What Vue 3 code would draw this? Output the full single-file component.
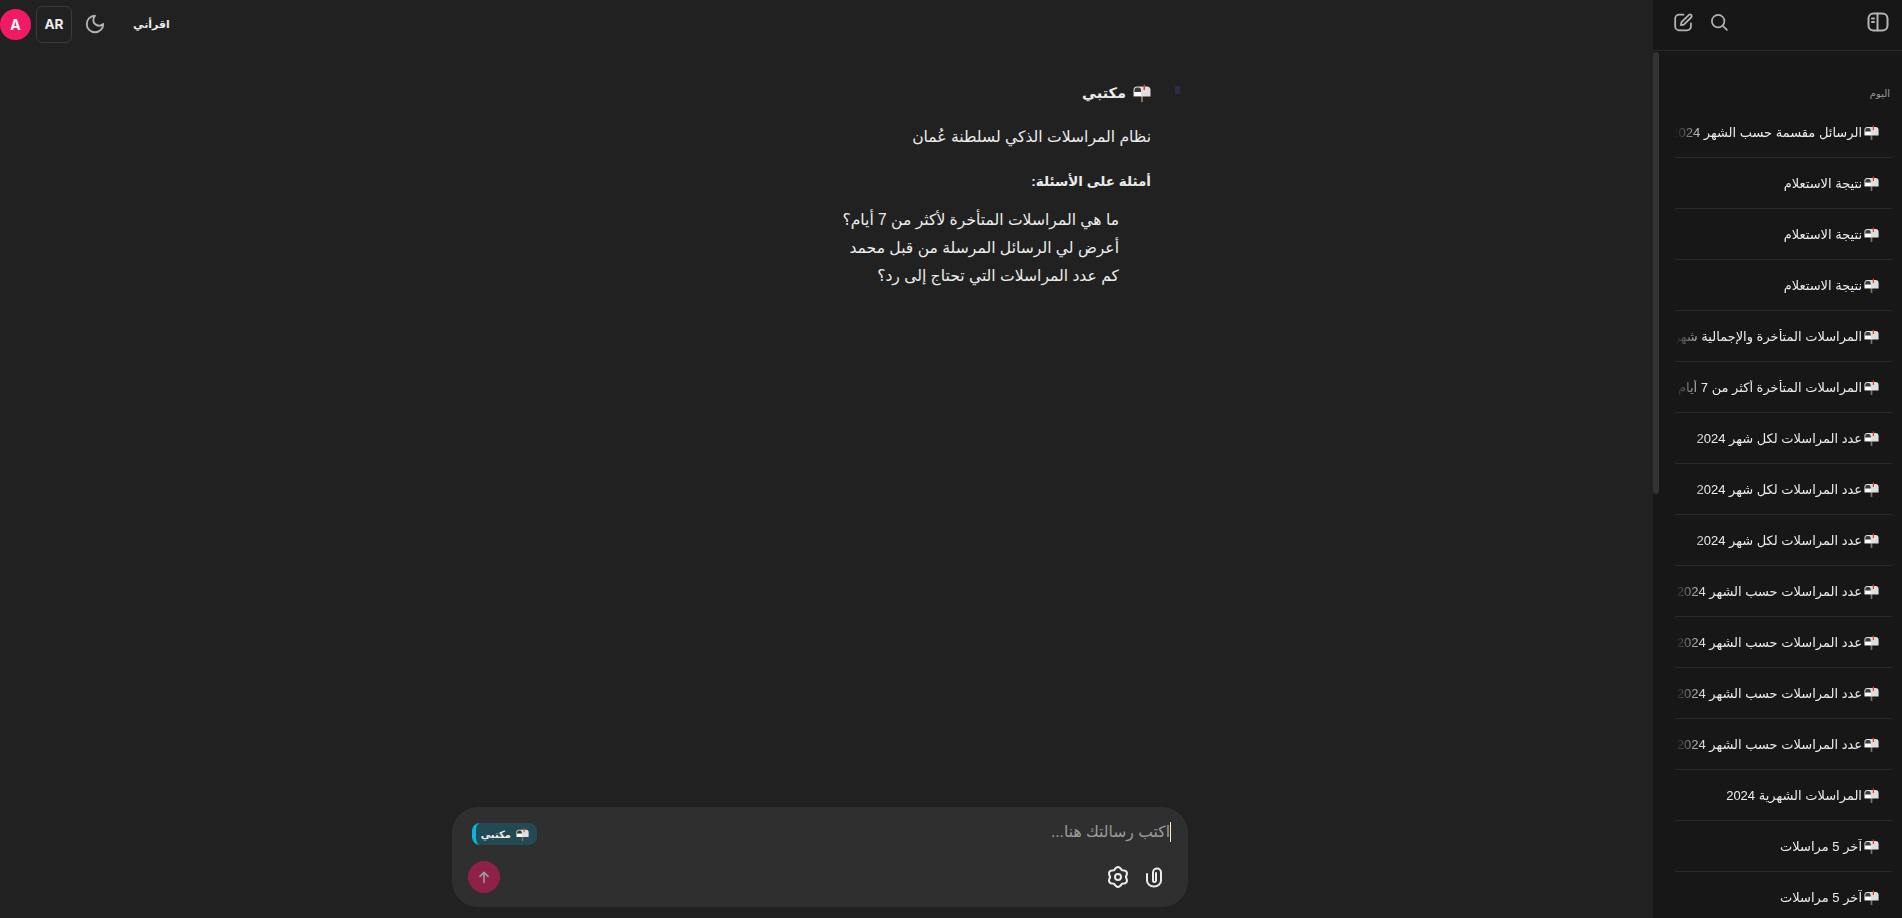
<template>
  <div class="page" dir="rtl">
    <svg class="defs" width="0" height="0" aria-hidden="true">
      <symbol id="mailbox" viewBox="0 0 18 18">
        <path d="M8 12h2v6H8z" fill="#8a6f55" />
        <path d="M4 2.500h10A3.500 3.500 0 0 1 17.500 6v6.500H.5V6A3.500 3.500 0 0 1 4 2.500z" fill="#dedede" />
        <path d="M4 3.500A2.500 2.500 0 0 0 1.500 6v2h6.500V6a2.500 2.500 0 0 0-2.500-2.500z" fill="#3a3a3a" />
        <path d="M1.500 8H8v4H1.500z" fill="#fff" />
        <path d="M10.500 .5H12V6h-1.500z" fill="#e8392e" />
      </symbol>
    </svg>

    <aside class="sidebar">
      <div class="side-top">
        <button class="icon-btn">
          <svg viewBox="0 0 24 24" width="24" height="24"><rect x="2.500" y="3.500" width="19" height="17" rx="5" /><path d="M11.500 3.500v17M6 8.500h2M6 12h2" /></svg>
        </button>
        <div class="side-actions">
          <button class="icon-btn">
            <svg viewBox="0 0 24 24" width="20" height="20"><circle cx="11" cy="11" r="7.500" /><path d="m16.500 16.500 5 5" /></svg>
          </button>
          <button class="icon-btn">
            <svg viewBox="0 0 24 24" width="21" height="21"><path d="M12 3H7a4.500 4.500 0 0 0-4.500 4.500v9A4.500 4.500 0 0 0 7 21h9a4.500 4.500 0 0 0 4.500-4.500V13" /><path d="m9 15 .7-3.300L18.200 3.200a2 2 0 0 1 2.800 2.800L12.400 14.400z" /></svg>
          </button>
        </div>
      </div>
      <div class="side-scroll">
        <div class="thumb"></div>
        <div class="day">اليوم</div>
        <div v-for="(item, i) in chats" :key="i" class="chat-row">
          <svg class="mail" width="15" height="15"><use href="#mailbox" /></svg>
          <span class="chat-title">{{ item }}</span>
        </div>
      </div>
    </aside>

    <main class="main">
      <header class="topbar">
        <span class="readme">اقرأني</span>
        <button class="icon-btn moon">
          <svg viewBox="0 0 24 24" width="22" height="22"><path d="M12 3a6 6 0 0 0 9 9 9 9 0 1 1-9-9Z" /></svg>
        </button>
        <div class="lang">AR</div>
        <div class="avatar">A</div>
      </header>

      <section class="conversation">
        <div class="message">
          <i class="broken-avatar"></i>
          <div class="body">
            <div class="name"><svg class="mail" width="18" height="18"><use href="#mailbox" /></svg><span>مكتبي</span></div>
            <p class="lead">نظام المراسلات الذكي لسلطنة عُمان</p>
            <p class="lead examples-title"><strong>أمثلة على الأسئلة:</strong></p>
            <ul>
              <li v-for="q in examples" :key="q">{{ q }}</li>
            </ul>
          </div>
        </div>
      </section>

      <div class="composer">
        <div class="input-line">
          <span class="placeholder">اكتب رسالتك هنا...</span>
          <span class="chip"><svg class="mail" width="13" height="13"><use href="#mailbox" /></svg><span>مكتبي</span></span>
        </div>
        <div class="tools">
          <div class="tool-icons">
            <button class="icon-btn light">
              <svg viewBox="0 0 24 24" width="24" height="24"><path d="M5 9v6.500a7 6 0 0 0 14 0V7.500a4 4 0 0 0-8 0v8a1.500 1.500 0 0 0 3 0V8" /></svg>
            </button>
            <button class="icon-btn light">
              <svg viewBox="0 0 24 24" width="24" height="24"><path d="M8.100 5.250Q12-1.250 15.900 5.250 23.470 5.375 19.800 12 23.470 18.625 15.900 18.750 12 25.250 8.100 18.750 .53 18.625 4.200 12 .53 5.375 8.100 5.250Z" /><circle cx="12" cy="12" r="3" /></svg>
            </button>
          </div>
          <button class="send">
            <svg viewBox="0 0 24 24" width="16" height="16"><path d="M12 20V5M6 11l6-6 6 6" /></svg>
          </button>
        </div>
      </div>
    </main>
  </div>
</template>

<script setup>
const late = 'المراسلات المتأخرة'
const chats = [
  'الرسائل مقسمة حسب الشهر 2024',
  'نتيجة الاستعلام',
  'نتيجة الاستعلام',
  'نتيجة الاستعلام',
  late + ' والإجمالية شهريا',
  late + ' أكثر من 7 أيام',
  'عدد المراسلات لكل شهر 2024',
  'عدد المراسلات لكل شهر 2024',
  'عدد المراسلات لكل شهر 2024',
  'عدد المراسلات حسب الشهر 2024',
  'عدد المراسلات حسب الشهر 2024',
  'عدد المراسلات حسب الشهر 2024',
  'عدد المراسلات حسب الشهر 2024',
  'المراسلات الشهرية 2024',
  'آخر 5 مراسلات',
  'آخر 5 مراسلات',
]

const examples = [
  'ما هي المراسلات المتأخرة لأكثر من 7 أيام؟',
  'أعرض لي الرسائل المرسلة من قبل محمد',
  'كم عدد المراسلات التي تحتاج إلى رد؟',
]
</script>

<style>
html, body {
  margin: 0;
  background: #212121;
  overflow: hidden;
}
</style>

<style scoped>
.page {
  display: flex;
  height: 918px;
  overflow: hidden;
  background: #212121;
  color: #ececec;
  font-family: "Liberation Sans", "DejaVu Sans", sans-serif;
}

.defs {
  position: absolute;
}

.sidebar {
  width: 249px;
  flex-shrink: 0;
  background: #171717;
  display: flex;
  flex-direction: column;
  overflow: hidden;
}

.side-top {
  height: 51px;
  flex-shrink: 0;
  box-sizing: border-box;
  border-bottom: 1px solid #2a2a2a;
  display: flex;
  align-items: center;
  justify-content: space-between;
  padding: 0 12px 6px 20px;
}

.side-actions {
  display: flex;
  gap: 15px;
  align-items: center;
}

.icon-btn {
  background: none;
  border: 0;
  padding: 0;
  color: #b4b4b4;
  display: flex;
  cursor: pointer;
}

.icon-btn svg {
  fill: none;
  stroke: currentColor;
  stroke-width: 2;
  stroke-linecap: round;
  stroke-linejoin: round;
}

.icon-btn.light {
  color: #ececec;
}

.side-scroll {
  position: relative;
  flex: 1;
  padding: 35px 10px 0 22px;
}

.thumb {
  position: absolute;
  left: 0;
  top: 1px;
  width: 6px;
  height: 442px;
  background: #333;
  border-radius: 3px;
}

.day {
  font-size: 10px;
  color: #9a9a9a;
  height: 16px;
  line-height: 16px;
  padding-right: 2px;
  margin-bottom: 5px;
}

.chat-row {
  height: 51px;
  box-sizing: border-box;
  border-bottom: 1px solid #2a2a2a;
  display: flex;
  align-items: center;
  gap: 2px;
  padding-right: 13px;
  font-size: 13px;
  overflow: hidden;
}

.chat-title {
  flex: 1;
  min-width: 0;
  white-space: nowrap;
  overflow: hidden;
  -webkit-mask-image: linear-gradient(to right, transparent, #000 30px);
  mask-image: linear-gradient(to right, transparent, #000 30px);
}

.mail {
  flex-shrink: 0;
}

.main {
  flex: 1;
  min-width: 0;
  display: flex;
  flex-direction: column;
  padding-right: 13px;
}

.topbar {
  height: 48px;
  flex-shrink: 0;
  display: flex;
  align-items: center;
  justify-content: flex-end;
}

.readme {
  font-size: 11px;
  font-weight: 700;
  margin-left: 27px;
}

.moon {
  margin-left: 12px;
}

.lang {
  width: 36px;
  height: 37px;
  box-sizing: border-box;
  border: 1px solid #3a3a3a;
  border-radius: 6px;
  display: flex;
  align-items: center;
  justify-content: center;
  font-family: "Inter", sans-serif;
  font-size: 13.600px;
  font-weight: 700;
  margin-left: 5px;
}

.avatar {
  width: 31px;
  height: 31px;
  border-radius: 50%;
  background: #f31a65;
  color: #fff;
  display: flex;
  align-items: center;
  justify-content: center;
  font-family: "Inter", sans-serif;
  font-size: 14px;
  font-weight: 700;
}

.conversation {
  flex: 1;
  display: flex;
  justify-content: center;
  padding-top: 35px;
}

.message {
  width: 720px;
  display: flex;
  gap: 24px;
}

.broken-avatar {
  width: 5px;
  height: 8px;
  margin-top: 3px;
  background: #2c2a4a;
}

.name {
  display: flex;
  align-items: center;
  gap: 7px;
  font-size: 14.500px;
  font-weight: 700;
  height: 20px;
  margin-bottom: 22px;
}

.lead {
  margin: 0 0 20px;
  font-size: 15.600px;
  line-height: 24px;
}

.examples-title {
  margin-bottom: 12px;
}

.lead strong {
  font-size: 13.500px;
}

ul {
  list-style: none;
  margin: 0;
  padding: 0 32px 0 0;
  font-size: 15.600px;
  line-height: 28px;
}

.composer {
  width: 736px;
  height: 100px;
  box-sizing: border-box;
  margin: 0 auto 11px;
  background: #2f2f2f;
  border-radius: 26px;
  padding: 11px 17px 14px 16px;
  display: flex;
  flex-direction: column;
  justify-content: space-between;
}

.input-line {
  display: flex;
  align-items: center;
  justify-content: space-between;
}

.placeholder {
  font-size: 15.600px;
  color: #9b9b9b;
  border-right: 1px solid #ececec;
  line-height: 20px;
}

.chip {
  height: 22px;
  width: 65px;
  box-sizing: border-box;
  margin: 5px 0 0 4px;
  border-radius: 8px;
  border-left: 4px solid #06b6d4;
  background: #234a52;
  font-size: 10px;
  font-weight: 700;
  display: flex;
  align-items: center;
  gap: 5px;
  padding-right: 8px;
}

.tools {
  display: flex;
  align-items: center;
  justify-content: space-between;
}

.tool-icons {
  display: flex;
  gap: 12px;
  padding-right: 5px;
}

.send {
  width: 32px;
  height: 32px;
  border: 0;
  padding: 0;
  border-radius: 50%;
  background: #8f2149;
  color: #9b9b9b;
  display: flex;
  align-items: center;
  justify-content: center;
  cursor: pointer;
}

.send svg {
  fill: none;
  stroke: currentColor;
  stroke-width: 2.400;
  stroke-linecap: round;
  stroke-linejoin: round;
}
</style>
